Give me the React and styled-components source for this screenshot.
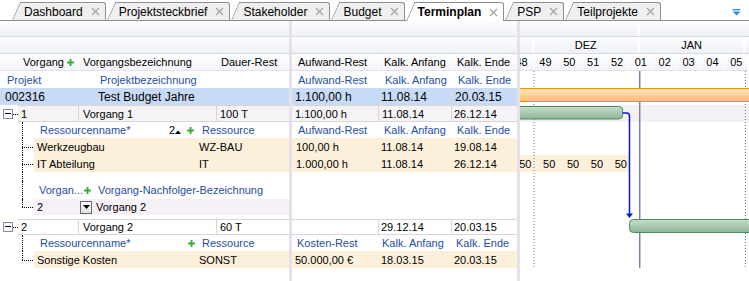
import React from "react";
import styled, { createGlobalStyle, css } from "styled-components";

const GlobalStyle = createGlobalStyle`
    html, body { margin:0; padding:0; background:#fff; }
    body {
        font-family:"Liberation Sans", Arial, sans-serif;
        font-size:11px;
        color:#000;
    }
    #root { width:749px; height:281px; overflow:hidden; }
`;

const BLUE_LABEL = "#1f4ea1";
const BEIGE = "#fdf0db";
const PROJECT_BLUE = "#c8dbf6";
const TASK_TINT = "#f6f3f7";
const SUCC_TINT = "#f6f1f6";

// Gantt scale
const DAY = 3.41;
const DEC1 = 14;
const dx = (d) => DEC1 + d * DAY;

const Screen = styled.div`
    width:749px;
    height:281px;
    display:flex;
    flex-direction:column;
    overflow:hidden;
    background:#fff;
`;

/* ---------- tabs ---------- */
const TabBar = styled.div`
    position:relative;
    display:flex;
    align-items:flex-end;
    flex:none;
    height:21px;
    padding-left:11px;
    border-bottom:1px solid #8e8e8e;
    box-sizing:border-box;
`;
const Tab = styled.div`
    position:relative;
    z-index:${p => (p.$active ? 3 : 1)};
    display:flex;
    align-items:center;
    gap:8px;
    height:17px;
    margin-left:9px;
    padding:0 5px 0 4px;
    background:${p => (p.$active ? "#fff" : "#efefef")};
    border:1px solid #8e8e8e;
    border-left:none;
    border-bottom:none;
    border-top-right-radius:3px;
    font-size:12px;
    font-weight:${p => (p.$active ? "bold" : "normal")};
    white-space:nowrap;
    ${p => p.$active && css`
        height:18px;
        margin-bottom:-1px;
    `}
    &::before {
        content:"";
        position:absolute;
        z-index:-1;
        top:-1px;
        bottom:0;
        left:-8px;
        width:13px;
        background:inherit;
        border-left:1px solid #8e8e8e;
        border-top:1px solid #8e8e8e;
        border-top-left-radius:2px;
        transform:skewX(-24deg);
        transform-origin:bottom left;
    }
`;
const TabMenu = styled.div`
    position:absolute;
    right:8px;
    top:9px;
    display:flex;
`;

const CloseIcon = () => (
    <svg width="9" height="9" viewBox="0 0 9 9">
        <path d="M1 1L8 8M8 1L1 8" stroke="#a2a2a2" strokeWidth="1.2" />
    </svg>
);

const MenuIcon = () => (
    <svg width="9" height="7" viewBox="0 0 9 7">
        <rect x="0.5" y="0" width="8" height="1.3" fill="#2f8ee6" />
        <path d="M0.5 2.5H8.5L4.5 6.5Z" fill="#2f8ee6" />
    </svg>
);

const PlusIcon = () => (
    <svg width="7" height="7" viewBox="0 0 7 7">
        <path d="M2.5 0h2v2.5H7v2H4.5V7h-2V4.5H0v-2h2.5z" fill="#3dab3d" />
    </svg>
);

const SortUp = () => (
    <svg width="6" height="4" viewBox="0 0 6 4" style={{ marginTop: 3 }}>
        <path d="M0 4L3 0.5L6 4Z" fill="#000" />
    </svg>
);

const DownArrow = () => (
    <svg width="7" height="4" viewBox="0 0 7 4">
        <path d="M0 0H7L3.5 4Z" fill="#000" />
    </svg>
);

/* ---------- panes ---------- */
const Workspace = styled.div`
    display:flex;
    flex:1;
    min-height:0;
`;
const Pane = styled.div`
    position:relative;
    display:flex;
    flex-direction:column;
    flex:none;
    width:${p => p.$w}px;
    overflow:hidden;
`;
const Splitter = styled.div`
    flex:none;
    width:3px;
    background:#e5e0ea;
`;

const Band = styled.div`
    display:flex;
    flex:none;
    height:${p => p.$h}px;
    margin-left:${p => p.$shift || 0}px;
    border-bottom:1px solid #d9dae0;
    box-sizing:border-box;
    background:linear-gradient(#fcfdfe, #eef1f8);
`;
const BandCell = styled.div`
    flex:none;
    width:${p => p.$w}px;
    display:flex;
    align-items:center;
    justify-content:center;
    box-sizing:border-box;
    border-right:2px solid #fff;
    font-size:11px;
`;
const HeadRow = styled.div`
    display:flex;
    flex:none;
    height:17px;
    margin-left:${p => p.$shift || 0}px;
    border-bottom:1px solid #e2e2e8;
    box-sizing:border-box;
    background:linear-gradient(#ffffff, #f3f4f9);
`;
const HeadCell = styled.div`
    flex:none;
    display:flex;
    align-items:center;
    justify-content:${p => (p.$center ? "center" : "flex-start")};
    gap:3px;
    width:${p => p.$w}px;
    padding-left:${p => p.$pl ?? 4}px;
    box-sizing:border-box;
    border-right:1px solid #fff;
    white-space:nowrap;
    overflow:hidden;
`;

const Row = styled.div`
    display:flex;
    flex:none;
    height:${p => p.$h || 17}px;
    box-sizing:border-box;
    background:${p => p.$bg || "transparent"};
    font-size:${p => (p.$big ? 12 : 11)}px;
    color:${p => (p.$label ? BLUE_LABEL : "#000")};
`;
const Cell = styled.div`
    flex:none;
    display:flex;
    align-items:center;
    gap:${p => p.$gap ?? 4}px;
    width:${p => (p.$w ? `${p.$w}px` : "auto")};
    ${p => !p.$w && css`flex:1;`}
    padding-left:${p => p.$pl ?? 4}px;
    box-sizing:border-box;
    white-space:nowrap;
    overflow:hidden;
    ${p => p.$grid && css`border-right:1px solid #d6d6d6;`}
`;
const TaskBody = styled.div`
    display:flex;
    flex:1;
    background:${p => p.$bg || "#fff"};
    border-top:1px solid #d6d6d6;
    border-bottom:1px solid #d6d6d6;
`;
const SubBody = styled.div`
    display:flex;
    flex:1;
    background:${p => p.$bg || "transparent"};
`;

const Toggle = styled.div`
    position:relative;
    flex:none;
    display:flex;
    align-items:center;
    width:18px;
    padding-left:3px;
    box-sizing:border-box;
    &::after {
        content:"";
        position:absolute;
        left:13px;
        right:0;
        top:50%;
        border-top:1px dotted #000;
    }
`;
const ToggleBox = styled.span`
    position:relative;
    width:10px;
    height:10px;
    box-sizing:border-box;
    border:1px solid #8a8aa0;
    background:#fff;
    &::before {
        content:"";
        position:absolute;
        left:1px;
        right:1px;
        top:3px;
        height:1px;
        background:#000;
    }
`;
const TreeGutter = styled.div`
    position:relative;
    flex:none;
    width:34px;
    &::before {
        content:"";
        position:absolute;
        left:22px;
        top:0;
        bottom:${p => (p.$end ? "50%" : "0")};
        border-left:1px dotted #000;
    }
    ${p => p.$branch && css`
        &::after {
            content:"";
            position:absolute;
            left:22px;
            right:1px;
            top:50%;
            border-top:1px dotted #000;
        }
    `}
`;
const DropButton = styled.span`
    display:inline-flex;
    align-items:center;
    justify-content:center;
    flex:none;
    width:12px;
    height:13px;
    box-sizing:border-box;
    border:1px solid #6a6a6a;
    background:linear-gradient(#ffffff, #e0e0e0);
`;
const GanttBody = styled.svg`
    display:block;
    flex:none;
`;

const tabs = ["Dashboard", "Projektsteckbrief", "Stakeholder", "Budget", "Terminplan", "PSP", "Teilprojekte"];
const weeks = ["48", "49", "50", "51", "52", "01", "02", "03", "04", "05"];

function Gantt() {
    const week = 7 * DAY;
    const jan1 = dx(31);
    const feb1 = dx(62);
    const bar1End = dx(26);
    const bar2Start = dx(28);
    return (
        <Pane $w={229}>
            <Band $h={16}>
                <BandCell $w={jan1} />
                <BandCell $w={130} />
            </Band>
            <Band $h={17}>
                <BandCell $w={DEC1} />
                <BandCell $w={31 * DAY}>DEZ</BandCell>
                <BandCell $w={31 * DAY}>JAN</BandCell>
                <BandCell $w={30} />
            </Band>
            <HeadRow $shift={dx(-7)}>
                {weeks.map((w) => (
                    <HeadCell key={w} $w={week} $pl={0} $center>{w}</HeadCell>
                ))}
            </HeadRow>
            <GanttBody width="229" height="210" viewBox="0 0 229 210">
                <defs>
                    <linearGradient id="orange" x1="0" y1="0" x2="0" y2="1">
                        <stop offset="0" stopColor="#ffe6c2" />
                        <stop offset="1" stopColor="#ffbd6e" />
                    </linearGradient>
                    <linearGradient id="green" x1="0" y1="0" x2="0" y2="1">
                        <stop offset="0" stopColor="#c7ddca" />
                        <stop offset="1" stopColor="#8db796" />
                    </linearGradient>
                </defs>
                <rect x="0" y="34" width="229" height="17" fill="#f3f1f8" />
                <rect x="0" y="84" width={bar2Start} height="17" fill={BEIGE} />

                <line x1={DEC1} y1="0" x2={DEC1} y2="197" stroke="#6b7aa3" strokeDasharray="1 2" />
                <line x1={feb1} y1="0" x2={feb1} y2="197" stroke="#6b7aa3" strokeDasharray="1 2" />
                <line x1={jan1} y1="0" x2={jan1} y2="197" stroke="#7a83a0" strokeWidth="1.5" />

                <rect x="-5" y="17.5" width="240" height="13" fill="url(#orange)" stroke="#f39200" />
                <rect x="-10" y="35.5" width={bar1End + 10} height="12.5" rx="4" fill="url(#green)" stroke="#4d8a5c" />
                <rect x={bar2Start} y="148.5" width="140" height="13" rx="4" fill="url(#green)" stroke="#4d8a5c" />

                <path
                    d={`M${bar1End} 42 H${bar2Start - 3} Q${bar2Start} 42 ${bar2Start} 45 V143`}
                    fill="none"
                    stroke="#0a14e6"
                    strokeWidth="1.5"
                />
                <path d={`M${bar2Start - 3.5} 142.5 H${bar2Start + 3.5} L${bar2Start} 147 Z`} fill="#0a14e6" />

                {[0, 7, 14, 21, 28].map((d) => (
                    <text
                        key={d}
                        x={dx(d) - 2.5}
                        y="96.5"
                        textAnchor="end"
                        fontFamily="Liberation Sans, Arial, sans-serif"
                        fontSize="11"
                        fill="#000"
                    >
                        50
                    </text>
                ))}
            </GanttBody>
        </Pane>
    );
}

export default function App() {
    return (
        <>
            <GlobalStyle />
            <Screen>
                <TabBar>
                    {tabs.map((t) => (
                        <Tab key={t} $active={t === "Terminplan"}>
                            <span>{t}</span>
                            <CloseIcon />
                        </Tab>
                    ))}
                    <TabMenu><MenuIcon /></TabMenu>
                </TabBar>

                <Workspace>
                    {/* Vorgangsliste */}
                    <Pane $w={289}>
                        <Band $h={16} />
                        <Band $h={17} />
                        <HeadRow>
                            <HeadCell $w={79} $pl={23}>Vorgang<PlusIcon /></HeadCell>
                            <HeadCell $w={138}>Vorgangsbezeichnung</HeadCell>
                            <HeadCell $w={72}>Dauer-Rest</HeadCell>
                        </HeadRow>
                        <Row $label>
                            <Cell $w={93} $pl={7}>Projekt</Cell>
                            <Cell $pl={7}>Projektbezeichnung</Cell>
                        </Row>
                        <Row $big $bg={PROJECT_BLUE}>
                            <Cell $w={93} $pl={5}>002316</Cell>
                            <Cell $pl={5}>Test Budget Jahre</Cell>
                        </Row>
                        <Row>
                            <Toggle><ToggleBox /></Toggle>
                            <TaskBody $bg={TASK_TINT}>
                                <Cell $w={61} $pl={3} $grid>1</Cell>
                                <Cell $w={138} $pl={4} $grid>Vorgang 1</Cell>
                                <Cell $pl={3}>100 T</Cell>
                            </TaskBody>
                        </Row>
                        <Row $h={16} $label>
                            <TreeGutter />
                            <Cell $w={128} $pl={6}>Ressourcenname*</Cell>
                            <Cell $w={34} $pl={7} $gap={0}>
                                <span style={{ color: "#000" }}>2</span><SortUp />
                                <span style={{ width: 6 }} /><PlusIcon />
                            </Cell>
                            <Cell $pl={6}>Ressource</Cell>
                        </Row>
                        <Row>
                            <TreeGutter $branch />
                            <SubBody $bg={BEIGE}>
                                <Cell $w={162} $pl={3}>Werkzeugbau</Cell>
                                <Cell $pl={3}>WZ-BAU</Cell>
                            </SubBody>
                        </Row>
                        <Row>
                            <TreeGutter $branch />
                            <SubBody $bg={BEIGE}>
                                <Cell $w={162} $pl={3}>IT Abteilung</Cell>
                                <Cell $pl={3}>IT</Cell>
                            </SubBody>
                        </Row>
                        <Row $h={9}><TreeGutter /></Row>
                        <Row $h={18} $label>
                            <TreeGutter />
                            <Cell $w={60} $pl={5} $gap={1}>Vorgan...<PlusIcon /></Cell>
                            <Cell $pl={4}>Vorgang-Nachfolger-Bezeichnung</Cell>
                        </Row>
                        <Row $h={16}>
                            <TreeGutter $branch $end />
                            <SubBody $bg={SUCC_TINT}>
                                <Cell $w={44} $pl={3}>2</Cell>
                                <Cell $pl={2}><DropButton><DownArrow /></DropButton>Vorgang 2</Cell>
                            </SubBody>
                        </Row>
                        <Row $h={4} />
                        <Row $h={16}>
                            <Toggle><ToggleBox /></Toggle>
                            <TaskBody>
                                <Cell $w={61} $pl={3} $grid>2</Cell>
                                <Cell $w={138} $pl={4} $grid>Vorgang 2</Cell>
                                <Cell $pl={3}>60 T</Cell>
                            </TaskBody>
                        </Row>
                        <Row $h={16} $label>
                            <TreeGutter />
                            <Cell $w={128} $pl={6}>Ressourcenname*</Cell>
                            <Cell $w={34} $pl={26} $gap={0}><PlusIcon /></Cell>
                            <Cell $pl={6}>Ressource</Cell>
                        </Row>
                        <Row>
                            <TreeGutter $branch $end />
                            <SubBody $bg={BEIGE}>
                                <Cell $w={162} $pl={3}>Sonstige Kosten</Cell>
                                <Cell $pl={3}>SONST</Cell>
                            </SubBody>
                        </Row>
                    </Pane>

                    <Splitter />

                    {/* Werte */}
                    <Pane $w={225}>
                        <Band $h={16} />
                        <Band $h={17} />
                        <HeadRow>
                            <HeadCell $w={87} $pl={6}>Aufwand-Rest</HeadCell>
                            <HeadCell $w={73} $pl={5}>Kalk. Anfang</HeadCell>
                            <HeadCell $w={65} $pl={5}>Kalk. Ende</HeadCell>
                        </HeadRow>
                        <Row $label>
                            <Cell $w={87} $pl={6}>Aufwand-Rest</Cell>
                            <Cell $w={73} $pl={6}>Kalk. Anfang</Cell>
                            <Cell $pl={6}>Kalk. Ende</Cell>
                        </Row>
                        <Row $big $bg={PROJECT_BLUE}>
                            <Cell $w={87} $pl={3}>1.100,00 h</Cell>
                            <Cell $w={73} $pl={2}>11.08.14</Cell>
                            <Cell $pl={3}>20.03.15</Cell>
                        </Row>
                        <Row>
                            <TaskBody $bg={TASK_TINT}>
                                <Cell $w={87} $pl={3} $grid>1.100,00 h</Cell>
                                <Cell $w={73} $pl={3} $grid>11.08.14</Cell>
                                <Cell $pl={2}>26.12.14</Cell>
                            </TaskBody>
                        </Row>
                        <Row $h={16} $label>
                            <Cell $w={87} $pl={6}>Aufwand-Rest</Cell>
                            <Cell $w={73} $pl={5}>Kalk. Anfang</Cell>
                            <Cell $pl={5}>Kalk. Ende</Cell>
                        </Row>
                        <Row $bg={BEIGE}>
                            <Cell $w={87} $pl={4}>100,00 h</Cell>
                            <Cell $w={73} $pl={2}>11.08.14</Cell>
                            <Cell $pl={2}>19.08.14</Cell>
                        </Row>
                        <Row $bg={BEIGE}>
                            <Cell $w={87} $pl={4}>1.000,00 h</Cell>
                            <Cell $w={73} $pl={2}>11.08.14</Cell>
                            <Cell $pl={2}>26.12.14</Cell>
                        </Row>
                        <Row $h={9} />
                        <Row $h={18} />
                        <Row $h={16} />
                        <Row $h={4} />
                        <Row $h={16}>
                            <TaskBody>
                                <Cell $w={87} $pl={3} $grid />
                                <Cell $w={73} $pl={2} $grid>29.12.14</Cell>
                                <Cell $pl={2}>20.03.15</Cell>
                            </TaskBody>
                        </Row>
                        <Row $h={16} $label>
                            <Cell $w={87} $pl={5}>Kosten-Rest</Cell>
                            <Cell $w={73} $pl={3}>Kalk. Anfang</Cell>
                            <Cell $pl={4}>Kalk. Ende</Cell>
                        </Row>
                        <Row $bg={BEIGE}>
                            <Cell $w={87} $pl={3}>50.000,00 €</Cell>
                            <Cell $w={73} $pl={2}>18.03.15</Cell>
                            <Cell $pl={2}>20.03.15</Cell>
                        </Row>
                    </Pane>

                    <Splitter />

                    <Gantt />
                </Workspace>
            </Screen>
        </>
    );
}
